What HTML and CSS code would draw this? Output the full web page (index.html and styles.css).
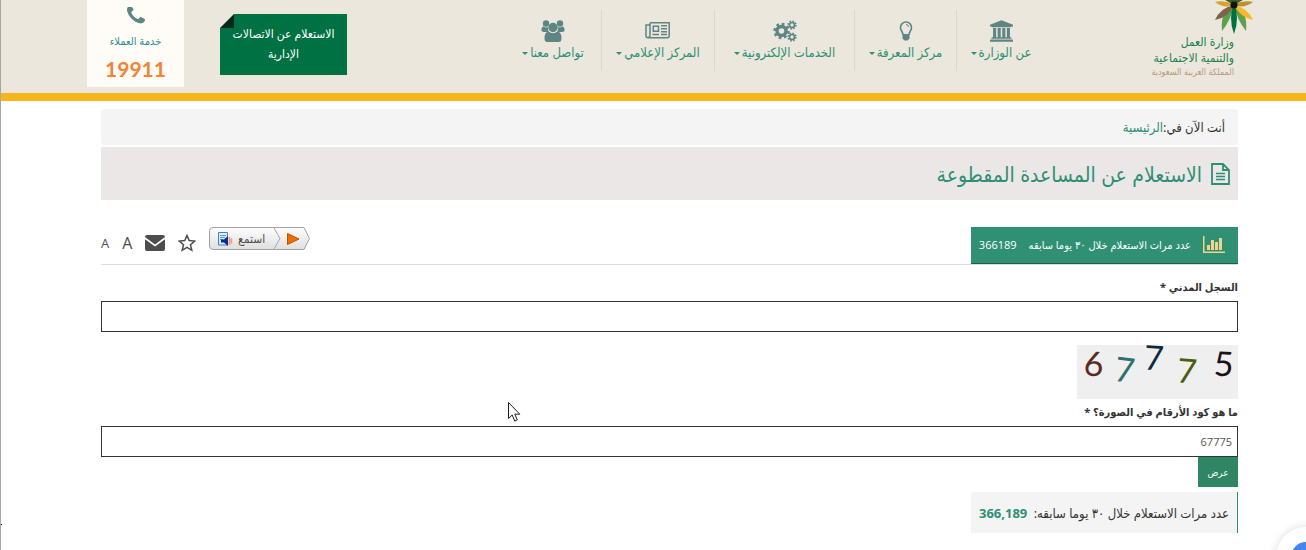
FILE: index.html
```html
<!DOCTYPE html>
<html lang="ar" dir="rtl">
<head>
    <meta charset="UTF-8">
    <meta name="viewport" content="width=device-width, initial-scale=1.0">
    <title>الاستعلام عن المساعدة المقطوعة</title>
    <link rel="stylesheet" href="styles.css">
</head>
<body>
    <header class="header">
        <a class="logo" href="#">
            <svg class="palm" viewBox="0 0 40 34" width="40" height="34" aria-hidden="true">
                <path d="M20 5Q6 10 8 31Q17 20 20 5Z" fill="#5fa04e"/>
                <path d="M20 5Q34 10 32 31Q23 20 20 5Z" fill="#5fa04e"/>
                <path d="M20 5Q6 8 1 20Q14 18 20 5Z" fill="#7b6547"/>
                <path d="M20 5Q34 8 39 20Q27 18 20 5Z" fill="#fbb62b"/>
                <path d="M20 4Q8 0 1 2Q10 9 20 5Z" fill="#d9a12e"/>
                <path d="M20 4Q32 0 39 2Q30 9 20 5Z" fill="#b9912f"/>
                <path d="M20 5L11 0H29Z" fill="#3e5a22"/>
                <path d="M20 3Q14 18 20 34Q26 18 20 3Z" fill="#00703f"/>
                <circle cx="20" cy="5" r="3.500" fill="#0d140b"/>
            </svg>
            <span class="logo-name">وزارة العمل</span>
            <span class="logo-name">والتنمية الاجتماعية</span>
            <span class="logo-country">المملكة العربية السعودية</span>
        </a>
        <nav class="nav">
            <a href="#">
                <svg viewBox="0 0 1920 1792" width="23" height="22"><path d="M960 0l960 384v128h-128q0 26-20.5 45t-48.5 19h-1526q-28 0-48.5-19t-20.5-45h-128v-128zm-704 640h256v768h128v-768h256v768h128v-768h256v768h128v-768h256v768h59q28 0 48.5 19t20.5 45v64h-1664v-64q0-26 20.5-45t48.5-19h59v-768zm1595 960q28 0 48.5 19t20.5 45v128h-1920v-128q0-26 20.5-45t48.5-19h1782z"/></svg>
                <span class="nav-text">عن الوزارة</span>
            </a>
            <a href="#">
                <svg viewBox="0 0 24 22" width="24" height="22">
                    <path class="line" d="M9 15C9 12 6.500 10.500 6.500 7.500a5.500 5.500 0 0 1 11 0C17.500 10.500 15 12 15 15" stroke-width="1.600"/>
                    <path class="line" d="M12 4.500q2.500 0 2.500 2.500"/>
                    <path d="M8.500 14h7v4.500l-2 2h-3l-2-2z"/>
                </svg>
                <span class="nav-text">مركز المعرفة</span>
            </a>
            <a href="#">
                <svg class="line" viewBox="0 0 24 22" width="24" height="22">
                    <circle cx="8.500" cy="11" r="4.500" stroke-width="3.400"/>
                    <circle cx="8.500" cy="11" r="7" stroke-width="2.400" stroke-dasharray="2.800 2.700"/>
                    <circle cx="19" cy="5" r="2.500" stroke-width="1.700"/>
                    <circle cx="19" cy="5" r="3.900" stroke-width="1.500" stroke-dasharray="1.600 1.460"/>
                    <circle cx="19" cy="17" r="2.500" stroke-width="1.700"/>
                    <circle cx="19" cy="17" r="3.900" stroke-width="1.500" stroke-dasharray="1.600 1.460"/>
                </svg>
                <span class="nav-text">الخدمات الإلكترونية</span>
            </a>
            <a href="#">
                <svg class="line" viewBox="0 0 26 22" width="26" height="22" stroke-width="1.500">
                    <path d="M5 2.800h19.200v13q0 2-2 2H3q-2 0-2-2V5h4M5 3v12.500q0 2-2 2"/>
                    <path d="M8.300 6.200h5.200v5H8.300zM16 5.700h6M16 8.700h6M16 11.700h6M7.500 14.500h6.500M16 14.500h6"/>
                </svg>
                <span class="nav-text">المركز الإعلامي</span>
            </a>
            <a href="#">
                <svg viewBox="0 0 24 22" width="24" height="22">
                    <circle cx="5" cy="3.500" r="3.200"/>
                    <circle cx="19" cy="3.500" r="3.200"/>
                    <path d="M2.500 6.500Q5 8 7 7Q6.500 10 8 12H3Q0 12 .5 9Q1 6 2.500 6.500ZM21.500 6.500Q19 8 17 7Q17.500 10 16 12H21Q24 12 23.500 9Q23 6 21.500 6.500Z"/>
                    <circle cx="12" cy="7.500" r="4.700"/>
                    <path d="M7.500 11.500Q12 15 16.500 11.500Q20.500 12 20.500 18.500Q20.500 22 17.500 22H6.500Q3.500 22 3.500 18.500Q3.500 12 7.500 11.500Z"/>
                </svg>
                <span class="nav-text">تواصل معنا</span>
            </a>
        </nav>
        <a class="calls-btn" href="#">الاستعلام عن الاتصالات الإدارية</a>
        <div class="phone-card">
            <svg viewBox="192 256 1408 1408" width="18" height="18" aria-hidden="true"><path d="M1600 1240q0 27-10 70.5t-21 68.5q-21 50-122 106-94 51-186 51-27 0-53-3.500t-57-12.500-47-14.500-55.500-20.500-49.500-18q-98-35-175-83-127-79-264-216t-216-264q-48-77-83-175-3-9-18-49.500t-20.500-55.500-14.500-47-12.500-57-3.500-53q0-92 51-186 56-101 106-122 25-11 68.500-21t70.500-10q14 0 21 3 18 6 53 76 11 19 30 54t35 63.500 31 53.500q3 4 17.500 25t21.500 35.500 7 28.500q0 20-28.500 50t-62 55-62 53-28.500 46q0 9 5 22.500t8.500 20.500 14 24 11.500 19q76 137 174 235t235 174q2 1 19 11.500t24 14 20.500 8.500 22.500 5q18 0 46-28.500t53-62 55-62 50-28.500q14 0 28.500 7t35.500 21.500 25 17.500q25 15 53.500 31t63.500 35 54 30q70 35 76 53 3 7 3 21z"/></svg>
            <a href="#">خدمة العملاء</a>
            <strong>19911</strong>
        </div>
    </header>

    <main class="container">
        <div class="breadcrumb">أنت الآن في:<a href="#">الرئيسية</a></div>
        <h1 class="page-title">
            <svg viewBox="0 0 19 22" width="19" height="22" fill="none" stroke="#2e8f74" stroke-width="1.800" aria-hidden="true">
                <path d="M1 1h11l6 6v14H1zM12 1v6h6"/>
                <path d="M5 10.500h9M5 13.500h9M5 16.500h9" stroke-width="1.400"/>
            </svg>
            الاستعلام عن المساعدة المقطوعة
        </h1>

        <div class="toolbar">
            <div class="count-tab">
                <svg viewBox="0 0 22 18" width="22" height="18" aria-hidden="true"><path d="M0 0h1.500v15.500H22V17H0zM4 9h3v5H4zM8 4h3v10H8zM12 6h3v8h-3zM16 2h3v12h-3z"/></svg>
                <span>عدد مرات الاستعلام خلال ٣٠ يوما سابقه</span>
                <span>366189</span>
            </div>
            <div class="tools">
                <button class="listen" type="button">
                    <svg class="listen-shape" viewBox="0 0 102 24" width="102" height="24" aria-hidden="true">
                        <defs>
                            <linearGradient id="silver" x1="0" y1="0" x2="0" y2="1">
                                <stop offset="0" stop-color="#fdfdfd"/>
                                <stop offset="1" stop-color="#dfdfdf"/>
                            </linearGradient>
                        </defs>
                        <path d="M4 .5h91l5.500 11-5.500 11H4Q.5 22.500 .5 19V4Q.5 .5 4 .5Z" fill="url(#silver)" stroke="#a3a3a3"/>
                        <path d="M65 1l6 10.500-6 10.500" fill="none" stroke="#a8a8a8"/>
                        <path d="M78.500 6.500v11L90 12z" fill="#ef6c00" stroke="#c25000"/>
                        <path d="M9.500 5.500h9v12.500h-9z" fill="#dcecf9" stroke="#3f83c4"/>
                        <path d="M11 8.500h6M11 10.500h5M11 12.500h3" stroke="#5b9bd5"/>
                        <path d="M12 12.500h3l4-3.500v10l-4-3.500h-3z" fill="#052c98"/>
                        <path d="M20.500 10v8M22.500 11.500v5" stroke="#f4937c" stroke-width="1.500"/>
                    </svg>
                    <span>استمع</span>
                </button>
                <button class="tool" type="button" aria-label="المفضلة">
                    <svg viewBox="0 0 18 18" width="18" height="18"><path d="M9 1.500l2.200 5.100 5.500.5-4.200 3.700 1.300 5.500L9 13.400l-4.800 2.900 1.300-5.500L1.300 7.100l5.500-.5z" fill="none" stroke="#4d4d4d" stroke-width="1.500"/></svg>
                </button>
                <button class="tool" type="button" aria-label="أرسل">
                    <svg viewBox="0 0 20 16" width="20" height="16"><path d="M2 0h16q2 0 2 2L10 9.500 0 2Q0 0 2 0ZM0 4.200l10 7.300 10-7.300V14q0 2-2 2H2q-2 0-2-2z" fill="#4d4d4d"/></svg>
                </button>
                <button class="tool font-up" type="button">A</button>
                <button class="tool font-down" type="button">A</button>
            </div>
        </div>

        <form class="inquiry">
            <label for="nationalId">السجل المدني *</label>
            <input type="text" id="nationalId" name="nationalId">

            <svg class="captcha" viewBox="0 0 161 54" width="161" height="54" role="img" aria-label="67775">
                <rect width="161" height="54" fill="#efefef"/>
                <text x="7" y="31" fill="#5a2b24" transform="rotate(3 16 18)">6</text>
                <text x="38" y="37" fill="#2f6f70" transform="rotate(7 47 25)">7</text>
                <text x="67" y="25" fill="#0c2b42" transform="rotate(3 76 13)">7</text>
                <text x="100" y="38" fill="#4a5d12" transform="rotate(5 109 26)">7</text>
                <text x="137" y="31" fill="#1c1214" transform="rotate(3 147 18)">5</text>
            </svg>

            <label for="captchaCode">ما هو كود الأرقام في الصورة؟ *</label>
            <input type="text" id="captchaCode" name="captchaCode" value="67775">
            <button class="btn" type="submit">عرض</button>
        </form>

        <div class="counter">
            <span>عدد مرات الاستعلام خلال ٣٠ يوما سابقه:</span>
            <strong>366,189</strong>
        </div>
    </main>

    <span class="stray-dot"></span>
    <svg class="pointer" viewBox="0 0 13 20" width="13" height="20" aria-hidden="true"><path d="M.5 .5v16l3.700-3.500 2.500 6 2.600-1.100-2.500-5.700h5z" fill="#fff" stroke="#1c1c28"/></svg>
    <button class="chat" type="button" aria-label="محادثة"><span></span></button>
</body>
</html>
```

FILE: styles.css
```css
* {
    box-sizing: border-box;
}
body {
    margin: 0;
    min-height: 100vh;
    border-left: 1px solid #a6a6a6;
    background: #fff;
    color: #333;
    font-family: "Open Sans", "DejaVu Sans Condensed", "DejaVu Sans", sans-serif;
    font-size: 13px;
    line-height: 20px;
}
a {
    color: #2e8f74;
    text-decoration: none;
}
button,
input {
    font-family: inherit;
}
svg {
    flex-shrink: 0;
}
.header {
    display: flex;
    align-items: flex-start;
    height: 101px;
    padding: 0 54px 0 86px;
    background: #ece7dd;
    border-bottom: 8px solid #f7b519;
}

/* logo */
.logo {
    display: flex;
    flex-direction: column;
    width: 102px;
    padding-right: 18px;
    white-space: nowrap;
}
.palm {
    margin: 0 -20px 0 0;
}
.logo-name {
    color: #1b7f4f;
    font-size: 12px;
    line-height: 16px;
}
.logo-country {
    color: #b99b7b;
    font-size: 9px;
    line-height: 11px;
}

/* main menu */
.nav {
    display: grid;
    grid-template-columns: 88px 102px 140px 113px 97px;
    margin: 10px 105px 0 auto;
}
.nav a {
    display: flex;
    flex-direction: column;
    align-items: center;
    height: 61px;
    padding-top: 10px;
    white-space: nowrap;
}
.nav a + a {
    border-right: 1px solid #d8d6d6;
}
.nav svg {
    fill: #5c8583;
}
.nav .line {
    fill: none;
    stroke: #5c8583;
}
.nav-text::after {
    content: "";
    display: inline-block;
    margin-right: 2px;
    vertical-align: 2px;
    border: 3px solid transparent;
    border-top-color: #2e8f74;
    border-bottom: 0;
}
.calls-btn {
    position: relative;
    width: 127px;
    margin: 14px auto 0 0;
    padding: 10px 8px 11px;
    background: #007143;
    color: #fff;
    font-size: 12px;
    text-align: center;
}
.calls-btn::before {
    content: "";
    position: absolute;
    top: 0;
    left: 0;
    border: 7px solid;
    border-color: #ece7dd #04291a #04291a #ece7dd;
}
.phone-card {
    display: flex;
    flex-direction: column;
    align-items: center;
    width: 97px;
    height: 87px;
    margin-right: 36px;
    padding-top: 7px;
    background: #fffcf7;
}
.phone-card svg {
    fill: #5c8583;
}
.phone-card a {
    margin-top: 6px;
    color: #2d8e90;
    font-size: 11px;
}
.phone-card strong {
    color: #f58233;
    font-family: Lato, sans-serif;
    font-size: 21px;
    line-height: 36px;
}

/* page content */
.container {
    padding: 8px 68px 16px 100px;
}
.breadcrumb {
    padding: 8px 13px;
    background: #f4f4f4;
    border-radius: 4px;
}
.page-title {
    display: flex;
    align-items: center;
    gap: 9px;
    height: 53px;
    margin: 2px 0 27px;
    padding: 0 8px;
    background: #ebe7e6;
    color: #2e8f74;
    font-size: 21px;
    font-weight: 400;
}
.toolbar {
    display: flex;
    justify-content: space-between;
    border-bottom: 1px solid #ddd;
}
.count-tab {
    display: flex;
    align-items: center;
    gap: 12px;
    width: 267px;
    height: 37px;
    padding: 0 13px;
    background: #2f9074;
    border-bottom: 1px solid #1d5f4c;
    color: #fff;
    font-size: 11px;
    white-space: nowrap;
}
.count-tab svg {
    fill: #efd48e;
}
.tools {
    display: flex;
    align-items: center;
    gap: 13px;
    padding-bottom: 5px;
}
.listen,
.tool {
    padding: 0;
    border: 0;
    background: none;
    color: #4d4d4d;
    cursor: pointer;
}
.tool {
    display: flex;
}
.listen {
    position: relative;
    align-self: flex-start;
    width: 102px;
    height: 24px;
}
.listen-shape {
    position: absolute;
    top: 0;
    left: 0;
}
.listen span {
    position: relative;
    display: block;
    padding-right: 46px;
    font-size: 12px;
    line-height: 22px;
    text-align: right;
}
.font-up {
    font-size: 16px;
}
.font-down {
    font-size: 13px;
}

/* inquiry form */
.inquiry {
    display: flex;
    flex-direction: column;
    align-items: flex-start;
}
.inquiry label {
    padding: 12px 0 4px;
    font-size: 11px;
    font-weight: 700;
}
.captcha + label {
    padding-top: 3px;
}
.inquiry input {
    width: 100%;
    height: 31px;
    padding: 0 5px;
    border: 1px solid #333;
    color: #555;
    font-size: 11px;
}
.captcha {
    overflow: visible;
    margin-top: 13px;
    font-family: Lato, sans-serif;
    font-size: 34px;
    direction: ltr;
}
.btn {
    width: 40px;
    height: 30px;
    padding: 0;
    border: 0;
    background: #2e8665;
    color: #fff;
    font-size: 10px;
    cursor: pointer;
}
.counter {
    display: flex;
    justify-content: space-between;
    width: 267px;
    margin-top: 5px;
    padding: 11px 8px 10px;
    background: #f4f4f4;
    border-right: 1px solid #2e8f74;
    white-space: nowrap;
}
.counter strong {
    color: #2e8f74;
}

/* overlays */
.stray-dot {
    position: absolute;
    top: 524px;
    left: 1px;
    width: 1px;
    height: 1px;
    background: #000;
}
.pointer {
    position: absolute;
    top: 402px;
    left: 508px;
}
.chat {
    position: fixed;
    right: -30px;
    bottom: -37px;
    display: flex;
    align-items: center;
    justify-content: center;
    width: 60px;
    height: 60px;
    padding: 0;
    border: 0;
    border-radius: 50%;
    background: #fff;
    box-shadow: 0 0 8px rgba(0, 0, 0, 0.15);
}
.chat span {
    width: 30px;
    height: 30px;
    border-radius: 50%;
    background: #4285f4;
}
```
